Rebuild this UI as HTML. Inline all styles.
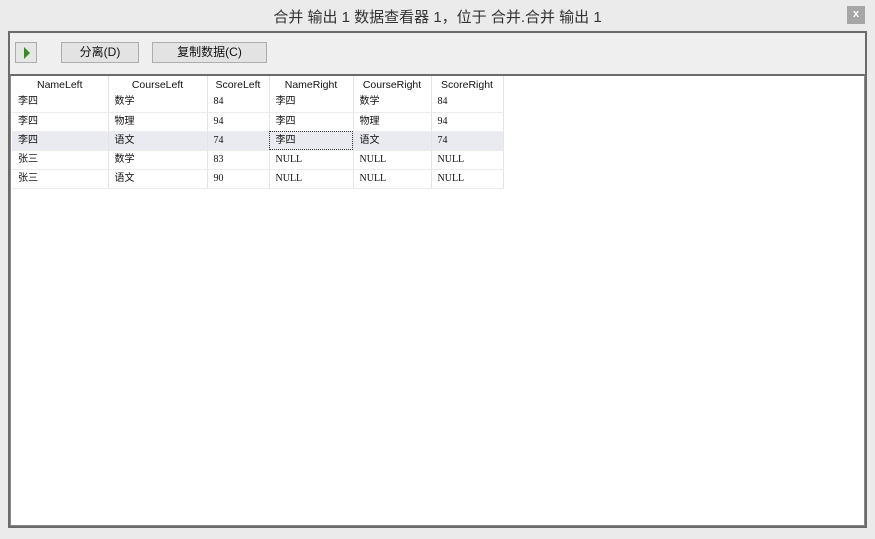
<!DOCTYPE html>
<html><head><meta charset="utf-8"><style>
*{margin:0;padding:0;box-sizing:border-box}
body{width:875px;height:539px;background:#ebebeb;font-family:"Liberation Sans","Noto Sans CJK SC",sans-serif;position:relative;overflow:hidden}
.title{position:absolute;top:6px;left:0;width:875px;text-align:center;font-size:15px;color:#333}
.x{position:absolute;left:847px;top:6px;width:18px;height:18px;background:#a6a6a6;color:#fff;font-size:11px;font-weight:bold;text-align:center;line-height:17px}
.frame{position:absolute;left:8px;top:31px;width:859px;height:497px;border:2px solid #6b6b6b;background:#efefef}
.play{position:absolute;left:5px;top:9px;width:22px;height:21px;border:1px solid #adadad;background:#e6e6e6}
.play:after{content:"";position:absolute;left:8px;top:4px;border-left:6px solid #3a8a2a;border-top:6px solid transparent;border-bottom:6px solid transparent}
.btn{position:absolute;top:9px;height:21px;border:1px solid #adadad;background:#e3e3e3;font-size:12px;text-align:center;line-height:19px;color:#111}
.grid{position:absolute;left:0;top:41px;width:855px;height:452px;background:#fff;border-top:2px solid #6b6b6b;border-left:1px solid #888;border-right:1px solid #888;border-bottom:1px solid #888}
table{border-collapse:collapse;font-size:10px;position:absolute;left:1px;top:0}
td{height:19px;line-height:18px;vertical-align:middle;border-right:1px solid #e4e4e4;border-bottom:1px solid #ececec;padding:0 0 0 6px;color:#111;white-space:nowrap}
th{height:17px;line-height:16px;font-weight:normal;border-right:1px solid #e4e4e4;text-align:center;font-size:10.5px;color:#111}
.s td{background:#e9ebf0}
.n{font-family:"Liberation Serif",serif;font-size:10px}
</style></head><body>
<div class="title">合并 输出 1 数据查看器 1，位于 合并.合并 输出 1</div>
<div class="x">x</div>
<div class="frame">
<div class="play"></div>
<div class="btn" style="left:51px;width:78px">分离(D)</div>
<div class="btn" style="left:142px;width:115px">复制数据(C)</div>
<div class="grid">
<table>
<colgroup><col style="width:96px"><col style="width:99px"><col style="width:62px"><col style="width:84px"><col style="width:78px"><col style="width:72px"></colgroup>
<tr><th>NameLeft</th><th>CourseLeft</th><th>ScoreLeft</th><th>NameRight</th><th>CourseRight</th><th>ScoreRight</th></tr>
<tr><td>李四</td><td>数学</td><td class="n">84</td><td>李四</td><td>数学</td><td class="n">84</td></tr>
<tr><td>李四</td><td>物理</td><td class="n">94</td><td>李四</td><td>物理</td><td class="n">94</td></tr>
<tr class="s"><td>李四</td><td>语文</td><td class="n">74</td><td style="outline:1px dotted #333;outline-offset:-1px">李四</td><td>语文</td><td class="n">74</td></tr>
<tr><td>张三</td><td>数学</td><td class="n">83</td><td class="n">NULL</td><td class="n">NULL</td><td class="n">NULL</td></tr>
<tr><td>张三</td><td>语文</td><td class="n">90</td><td class="n">NULL</td><td class="n">NULL</td><td class="n">NULL</td></tr>
</table>
</div>
</div>
</body></html>
